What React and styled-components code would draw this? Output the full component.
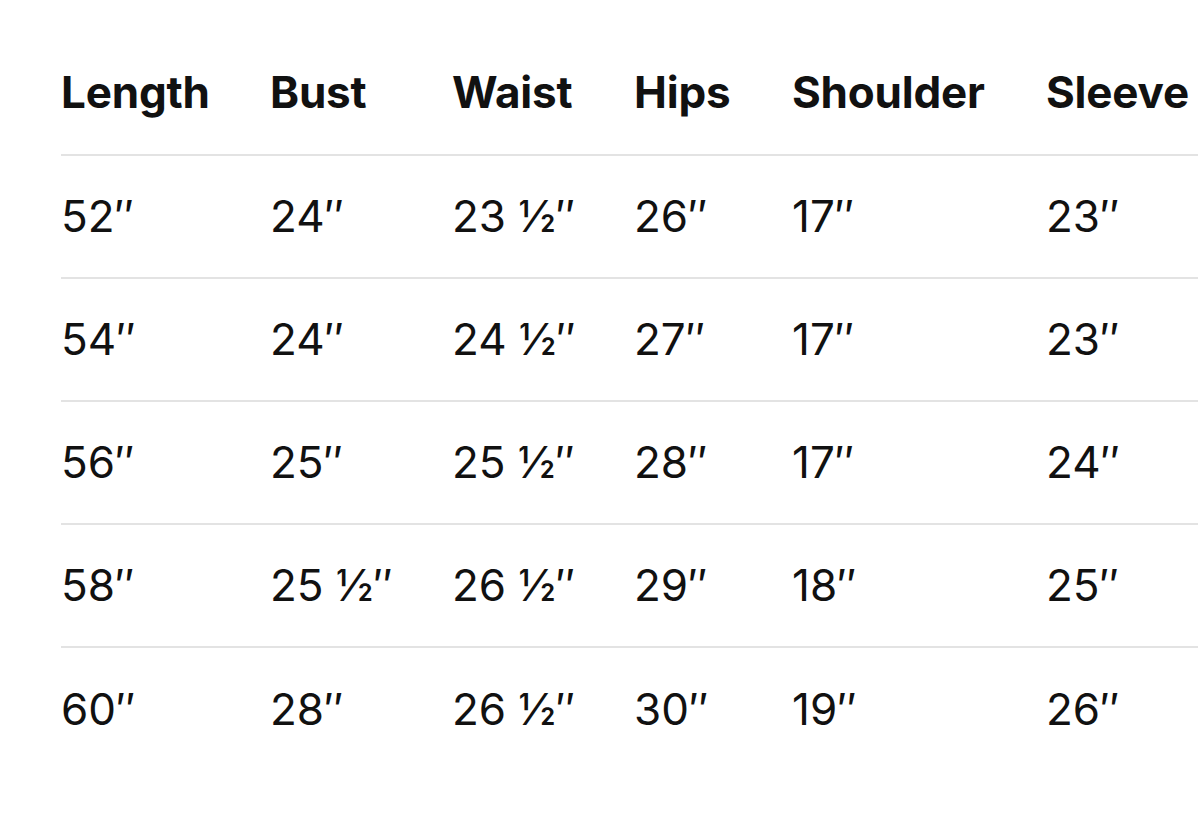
import React from 'react';
import styled, { createGlobalStyle } from 'styled-components';

const GlobalStyle = createGlobalStyle`
  html, body {
    margin: 0;
    padding: 0;
    background: #ffffff;
  }
  body {
    font-family: Inter, "Noto Sans", "Liberation Sans", sans-serif;
    color: #111111;
    overflow: hidden;
  }
`

const COLUMNS = '209px 182px 182px 158px 254px 1fr';

const Page = styled.div`
  padding: 33px 0 0 61px;
  width: 1198px;
  box-sizing: border-box;
`

const Table = styled.div`
  display: flex;
  flex-direction: column;
`

const Row = styled.div`
  display: grid;
  grid-template-columns: ${COLUMNS};
  align-items: center;
  height: 123px;
  box-sizing: border-box;
  border-bottom: ${(props) => (props.last ? 'none' : '2px solid #e3e3e3')};
`

const Cell = styled.div`
  font-size: 44px;
  line-height: 1;
  font-weight: ${(props) => (props.head ? 700 : 400)};
  letter-spacing: ${(props) => (props.head ? '-0.2px' : '0')};
  white-space: nowrap;
  margin-top: ${(props) => (props.head ? '-4px' : '-2px')};
`

const headers = ['Length', 'Bust', 'Waist', 'Hips', 'Shoulder', 'Sleeve'];

const rows = [
  ['52″', '24″', '23 ½″', '26″', '17″', '23″'],
  ['54″', '24″', '24 ½″', '27″', '17″', '23″'],
  ['56″', '25″', '25 ½″', '28″', '17″', '24″'],
  ['58″', '25 ½″', '26 ½″', '29″', '18″', '25″'],
  ['60″', '28″', '26 ½″', '30″', '19″', '26″'],
];

const App = () => {
  return (
    <>
      <GlobalStyle />
      <Page>
        <Table>
          <Row>
            {headers.map((h) => (
              <Cell head key={h}>{h}</Cell>
            ))}
          </Row>
          {rows.map((r, i) => (
            <Row key={i} last={i === rows.length - 1}>
              {r.map((v, j) => (
                <Cell key={j}>{v}</Cell>
              ))}
            </Row>
          ))}
        </Table>
      </Page>
    </>
  );
};

export default App;
